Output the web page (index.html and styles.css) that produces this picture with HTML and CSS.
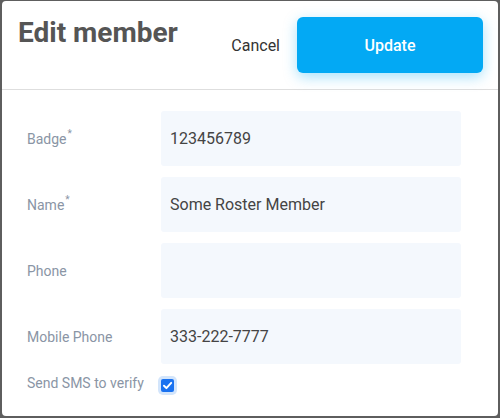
FILE: index.html
```html
<!DOCTYPE html>
<html>
<head>
<meta charset="utf-8">
<link rel="stylesheet" href="styles.css">
</head>
<body>
<div class="dialog">
  <header class="header">
    <h1 class="title">Edit member</h1>
    <div class="actions">
      <button class="btn-cancel" type="button">Cancel</button>
      <button class="btn-update" type="button">Update</button>
    </div>
  </header>
  <form class="form">
    <label class="label">Badge<sup class="req">*</sup></label>
    <input class="field" type="text" value="123456789">
    <label class="label">Name<sup class="req">*</sup></label>
    <input class="field" type="text" value="Some Roster Member">
    <label class="label">Phone</label>
    <input class="field" type="text" value="">
    <label class="label">Mobile Phone</label>
    <input class="field" type="text" value="333-222-7777">
    <label class="label">Send SMS to verify</label>
    <div class="check-cell">
      <span class="checkbox">
        <svg viewBox="0 0 13 13" width="13" height="13"><path d="M3 6.8 L5.4 9.1 L10.2 3.9" fill="none" stroke="#fff" stroke-width="2" stroke-linecap="round" stroke-linejoin="round"/></svg>
      </span>
    </div>
  </form>
</div>
</body>
</html>
```
FILE: styles.css
```css
html, body {
  margin: 0;
  padding: 0;
  height: 100%;
}
body {
  background: #5e5e5e;
  font-family: Roboto, "Liberation Sans", sans-serif;
  box-sizing: border-box;
  padding: 1px 2px 2px 2px;
}
.dialog {
  background: #fff;
  height: 100%;
  border-radius: 4px;
  overflow: hidden;
}
.header {
  display: flex;
  align-items: flex-start;
  padding: 15px 15px 16px 16px;
  border-bottom: 1px solid #dedede;
}
.title {
  margin: 0;
  font-size: 28px;
  font-weight: 700;
  color: #555;
  line-height: normal;
}
.actions {
  margin-left: auto;
  margin-top: 1px;
  display: flex;
  align-items: center;
  gap: 17px;
}
.btn-cancel {
  border: none;
  background: none;
  padding: 0;
  font-family: inherit;
  font-size: 16px;
  color: #333;
}
.btn-update {
  width: 186px;
  height: 56px;
  border: none;
  border-radius: 6px;
  background: #03a9f4;
  color: #fff;
  font-family: inherit;
  font-size: 16px;
  font-weight: 500;
  box-shadow: 0 4px 14px rgba(3, 169, 244, 0.35);
}
.form {
  display: grid;
  grid-template-columns: 134px 300px;
  grid-auto-rows: 55px;
  row-gap: 11px;
  padding: 21px 0 0 25px;
  margin: 0;
}
.label {
  align-self: center;
  font-size: 14px;
  color: #8a95a5;
}
.req {
  font-size: 10px;
  vertical-align: top;
  position: relative;
  top: -3px;
  margin-left: 1px;
}
.field {
  box-sizing: border-box;
  width: 300px;
  height: 55px;
  border: none;
  border-radius: 3px;
  background: #f4f8fd;
  padding: 0 9px;
  font-family: inherit;
  font-size: 16px;
  color: #444;
  outline: none;
}
.form > :nth-last-child(-n+2) {
  height: 21px;
}
.form {
  grid-template-rows: 55px 55px 55px 55px 21px;
}
.check-cell {
  display: flex;
  align-items: center;
}
.checkbox {
  width: 13px;
  height: 13px;
  border-radius: 2px;
  background: #1a72f0;
  box-shadow: 0 0 0 3px #d3e5fb;
  display: flex;
}
```
